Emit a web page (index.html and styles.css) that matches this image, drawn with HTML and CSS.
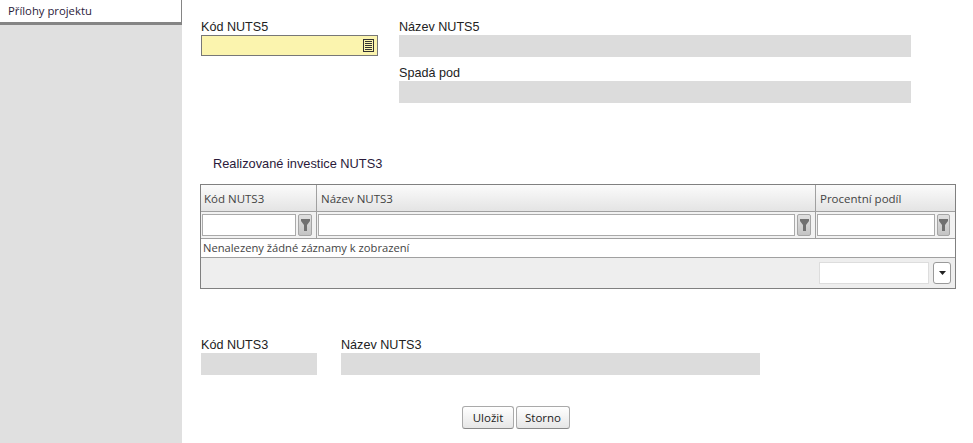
FILE: index.html
```html
<!DOCTYPE html>
<html>
<head>
    <title>Realizované investice NUTS3</title>
    <link rel="stylesheet" href="styles.css">
</head>
<body>
    <div class="layout">
        <div class="sidebar">
            <div class="side-item">Přílohy projektu</div>
        </div>
        <div class="content">
            <div class="top-form">
                <div class="col-code">
                    <label>Kód NUTS5</label>
                    <div class="lookup">
                        <svg class="lookup-icon" width="11" height="13" viewBox="0 0 11 13">
                            <rect x="0.5" y="0.5" width="10" height="12" fill="none" stroke="#333"/>
                            <path d="M2 2.500h7M2 4.500h7M2 6.500h7M2 8.500h7M2 10.500h7" stroke="#333" fill="none"/>
                        </svg>
                    </div>
                </div>
                <div class="col-name">
                    <label>Název NUTS5</label>
                    <div class="readonly"></div>
                    <label class="second">Spadá pod</label>
                    <div class="readonly"></div>
                </div>
            </div>

            <h3 class="grid-title">Realizované investice NUTS3</h3>

            <!-- grid -->
            <div class="grid">
                <div class="grid-row grid-head">
                    <div class="cell c1">Kód NUTS3</div>
                    <div class="cell c2">Název NUTS3</div>
                    <div class="cell c3">Procentní podíl</div>
                </div>
                <div class="grid-row grid-filter">
                    <div class="cell c1"><input type="text"><button class="filter-btn"><svg width="9" height="12" viewBox="0 0 9 12"><path d="M0 0h9v2L6 6v6H3V6L0 2z" fill="#707070"/></svg></button></div>
                    <div class="cell c2"><input type="text"><button class="filter-btn"><svg width="9" height="12" viewBox="0 0 9 12"><path d="M0 0h9v2L6 6v6H3V6L0 2z" fill="#707070"/></svg></button></div>
                    <div class="cell c3"><input type="text"><button class="filter-btn"><svg width="9" height="12" viewBox="0 0 9 12"><path d="M0 0h9v2L6 6v6H3V6L0 2z" fill="#707070"/></svg></button></div>
                </div>
                <div class="grid-empty">Nenalezeny žádné záznamy k zobrazení</div>
                <div class="grid-pager">
                    <div class="pager-box"></div>
                    <button class="pager-btn"><svg width="7" height="4" viewBox="0 0 7 4"><path d="M0 0h7L3.500 4z" fill="#222"/></svg></button>
                </div>
            </div>

            <div class="bottom-form">
                <div class="col-b1">
                    <label>Kód NUTS3</label>
                    <div class="readonly"></div>
                </div>
                <div class="col-b2">
                    <label>Název NUTS3</label>
                    <div class="readonly"></div>
                </div>
            </div>

            <div class="buttons">
                <button class="btn btn-save">Uložit</button>
                <button class="btn btn-cancel">Storno</button>
            </div>
        </div>
    </div>
</body>
</html>
```

FILE: styles.css
```css
html, body {
    height: 100%;
    margin: 0;
    padding: 0;
    overflow: hidden;
}

body {
    font-family: "Liberation Sans", Arial, sans-serif;
    font-size: 12px;
    color: #222;
    background: #fff;
}

.layout {
    display: flex;
    height: 443px;
}

.sidebar {
    width: 182px;
    flex: none;
    background: #e0e0e0;
}
.side-item {
    padding: 4px 0 0 8px;
    box-sizing: border-box;
    height: 25px;
    background: #fff;
    border-right: 1px solid #858585;
    border-bottom: 3px solid #858585;
    font-family: "Open Sans", sans-serif;
    font-size: 11.3px;
    line-height: 14px;
    color: #2a1a3a;
}

.content {
    flex: 1;
    padding-top: 20px;
}

label {
    display: block;
    font-size: 12.6px;
    line-height: 15px;
    color: #222;
}

.top-form {
    display: flex;
    padding-left: 19px;
}
.col-code {
    width: 177px;
    margin-right: 21px;
}
.col-name {
    width: 512px;
}
.col-name .second {
    margin-top: 9px;
}
.lookup {
    height: 21px;
    box-sizing: border-box;
    background: #fbf4ae;
    border: 1px solid #777;
    display: flex;
    align-items: center;
    justify-content: flex-end;
    padding-right: 3px;
}
.readonly {
    height: 22px;
    background: #dcdcdc;
}

.grid-title {
    margin: 53px 0 13px 31px;
    font-size: 12.8px;
    line-height: 15px;
    font-weight: normal;
    color: #2a1a3a;
}

.grid {
    width: 756px;
    margin-left: 18px;
    box-sizing: border-box;
    border: 1px solid #808080;
    font-family: "Open Sans", sans-serif;
    font-size: 11.5px;
    color: #444;
}
.grid-row {
    display: flex;
}
.cell {
    box-sizing: border-box;
    display: flex;
    align-items: center;
    border-right: 1px solid #a0a0a0;
}
.c1 {
    width: 116px;
}
.c2 {
    width: 499px;
}
.c3 {
    flex: 1;
    min-width: 0;
    border-right: none;
}
.grid-head {
    height: 27px;
    background: linear-gradient(#fbfbfb, #e4e4e4);
    border-bottom: 1px solid #a0a0a0;
    box-sizing: border-box;
}
.grid-head .cell {
    padding-left: 3px;
}
.grid-head .c2, .grid-head .c3 {
    padding-left: 4px;
}
.grid-filter {
    height: 27px;
    box-sizing: border-box;
    background: #f2f2f2;
    border-bottom: 1px solid #a0a0a0;
}
.grid-filter .cell {
    padding: 0 4px 0 1px;
    gap: 2px;
}
.grid-filter .c3 {
    padding-right: 5px;
}
.grid-filter input {
    flex: 1;
    min-width: 0;
    height: 22px;
    box-sizing: border-box;
    border: 1px solid #aaa;
    background: #fff;
    padding: 0;
}
.filter-btn {
    width: 14px;
    height: 22px;
    flex: none;
    padding: 0;
    border: 1px solid #a5a5a5;
    border-radius: 2px;
    background: linear-gradient(#e0e0e0, #c4c4c4);
    display: flex;
    align-items: center;
    justify-content: center;
}
.c3 .filter-btn {
    width: 13px;
}
.grid-empty {
    height: 19px;
    box-sizing: border-box;
    padding-left: 2px;
    font-size: 11.2px;
    line-height: 18px;
    background: #fff;
    border-bottom: 1px solid #a0a0a0;
}
.grid-pager {
    height: 30px;
    box-sizing: border-box;
    background: #eeeeee;
    display: flex;
    align-items: center;
    justify-content: flex-end;
    padding-right: 4px;
    gap: 4px;
}
.pager-box {
    width: 110px;
    height: 22px;
    box-sizing: border-box;
    background: #fff;
    border: 1px solid #ddd;
}
.pager-btn {
    width: 18px;
    height: 22px;
    padding: 0;
    background: #fff;
    border: 1px solid #999;
    border-radius: 3px;
    display: flex;
    align-items: center;
    justify-content: center;
}

.bottom-form {
    display: flex;
    margin-top: 49px;
    padding-left: 19px;
}
.col-b1 {
    width: 116px;
    margin-right: 24px;
}
.col-b2 {
    width: 419px;
}

.buttons {
    display: flex;
    gap: 2px;
    margin: 31px 0 0 280px;
}
.btn {
    height: 23px;
    padding: 0;
    border: 1px solid #aaa;
    border-bottom-color: #888;
    border-radius: 3px;
    background: linear-gradient(#fff, #e6e6e6);
    font-family: "Open Sans", sans-serif;
    font-size: 11.5px;
    color: #222;
}
.btn-save {
    width: 52px;
}
.btn-cancel {
    width: 54px;
}
```
